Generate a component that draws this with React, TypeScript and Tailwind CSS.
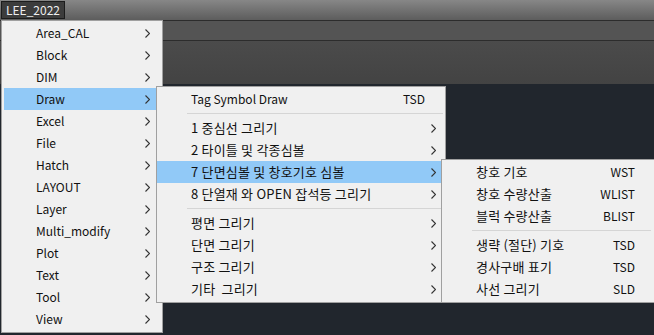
import React from 'react';

const font = { fontFamily: '"Noto Sans CJK KR", "Noto Sans", sans-serif' };

function Chevron() {
  return (
    <svg width="5" height="9" viewBox="0 0 5 9" className="shrink-0">
      <polyline points="0.5,0.5 4.5,4.5 0.5,8.5" fill="none" stroke="#333" strokeWidth="1.1" />
    </svg>
  );
}

const mainItems = ['Area_CAL', 'Block', 'DIM', 'Draw', 'Excel', 'File', 'Hatch', 'LAYOUT', 'Layer', 'Multi_modify', 'Plot', 'Text', 'Tool', 'View'];

type Item = { label: string; key?: string; sub?: boolean; active?: boolean } | 'sep';

const drawItems: Item[] = [
  { label: 'Tag Symbol Draw', key: 'TSD' },
  'sep',
  { label: '1 중심선 그리기', sub: true },
  { label: '2 타이틀 및 각종심볼', sub: true },
  { label: '7 단면심볼 및 창호기호 심볼', sub: true, active: true },
  { label: '8 단열재 와 OPEN 잡석등 그리기', sub: true },
  'sep',
  { label: '평면 그리기', sub: true },
  { label: '단면 그리기', sub: true },
  { label: '구조 그리기', sub: true },
  { label: '기타  그리기', sub: true },
];

const symbolItems: Item[] = [
  { label: '창호 기호', key: 'WST' },
  { label: '창호 수량산출', key: 'WLIST' },
  { label: '블럭 수량산출', key: 'BLIST' },
  'sep',
  { label: '생략 (절단) 기호', key: 'TSD' },
  { label: '경사구배 표기', key: 'TSD' },
  { label: '사선 그리기', key: 'SLD' },
];

// Korean labels render a bit larger in the original (Malgun Gothic)
const isKorean = (s: string) => /[가-힣]/.test(s);

function MenuRows({ items, sepInset }: { items: Item[]; sepInset: string }) {
  return (
    <>
      {items.map((it, i) =>
        it === 'sep' ? (
          <div key={i} className={`h-[7px] flex items-center ${sepInset}`}>
            <div className="h-px w-full bg-[#d5d5d5]" />
          </div>
        ) : (
          <div
            key={i}
            className={`h-[22px] flex items-center pl-[34px] pr-[9px] whitespace-pre ${it.active ? 'bg-[#91c9f7]' : ''}`}
          >
            <span className={`flex-1 ${isKorean(it.label) ? 'text-[13px] tracking-[0.2px]' : ''}`}>{it.label}</span>
            {it.key && <span className="mr-[11px]">{it.key}</span>}
            {it.sub && <Chevron />}
          </div>
        )
      )}
    </>
  );
}

export default function App() {
  return (
    <div className="relative w-[654px] h-[335px] overflow-hidden bg-[#21262d] text-[12px] text-[#111]" style={font}>
      {/* title bar */}
      <div className="h-[20px] bg-gradient-to-b from-[#878787] to-[#5d5d5d] flex items-start pl-px pt-px">
        <div className="h-[18px] w-[64px] bg-[#3c3c3c] border border-[#1c1c1c] text-[#eeeeee] flex items-center justify-center leading-none">
          LEE_2022
        </div>
      </div>
      <div className="h-px bg-[#2c2c2c]" />
      <div className="h-[19px] bg-[#545454]" />
      <div className="h-px bg-[#2c2c2c]" />
      <div className="h-[43px] bg-gradient-to-b from-[#4b4b4b] to-[#434343]" />

      {/* main menu */}
      <div className="absolute left-px top-[20px] w-[162px] h-[313px] bg-[#f0f0f0] border border-[#a0a0a0] pt-px px-[2px]">
        {mainItems.map((m) => (
          <div
            key={m}
            className={`h-[22px] flex items-center pl-[32px] pr-[10px] ${m === 'Draw' ? 'bg-[#91c9f7]' : ''}`}
          >
            <span className="flex-1">{m}</span>
            <Chevron />
          </div>
        ))}
      </div>

      {/* Draw submenu */}
      <div className="absolute left-[156px] top-[86px] w-[290px] h-[217px] bg-[#f0f0f0] border border-[#a0a0a0] pt-px">
        <MenuRows items={drawItems} sepInset="pl-[30px] pr-[2px]" />
      </div>

      {/* symbol submenu */}
      <div className="absolute left-[441px] top-[159px] w-[215px] h-[144px] bg-[#f0f0f0] border border-[#a0a0a0] pt-px">
        <MenuRows items={symbolItems} sepInset="pl-[30px] pr-[4px]" />
      </div>
    </div>
  );
}
